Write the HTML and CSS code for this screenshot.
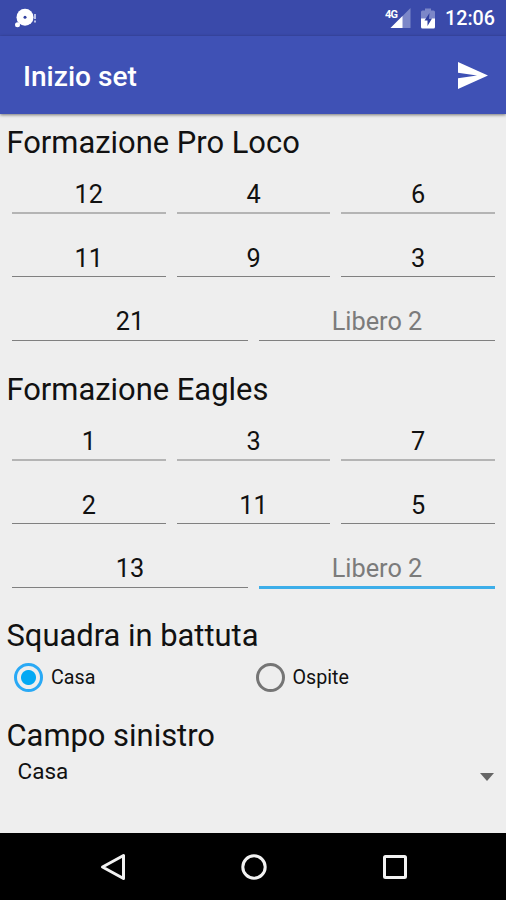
FILE: index.html
```html
<!DOCTYPE html>
<html lang="it">
<head>
<meta charset="utf-8">
<title>Inizio set</title>
<link rel="stylesheet" href="styles.css">
</head>
<body>
<div class="status">
  <svg class="app-icon" width="24" height="20" viewBox="0 0 24 20"><circle cx="11" cy="9.300" r="8.500" fill="#fff"/><circle cx="3.500" cy="16.800" r="2.500" fill="#fff"/><circle cx="11" cy="9.300" r="1.500" fill="#303f9f"/><path d="M21 6v5M21 12.500v2" stroke="#b9c0e6" stroke-width="2"/></svg>
  <svg class="signal" width="26" height="22" viewBox="0 0 26 22"><path d="M5.500 21L25.500 1v20z" fill="#7c87c8"/><path d="M5.500 21L17.500 9v12z" fill="#fff"/><text class="net" x="0" y="10.500" textLength="13">4G</text></svg>
  <svg class="battery" width="14" height="21" viewBox="0 0 14 21"><path d="M0 11V4q0-1.500 1.500-1.500H4V.5h6v2h2.500Q14 2.500 14 4v7z" fill="#7c87c8"/><path d="M0 10.500h14V19q0 1.500-1.500 1.500h-11Q0 20.500 0 19z" fill="#fff"/><path d="M8.500 5L3.500 12.500H6.500V18L11 10.500H8z" fill="#303f9f"/></svg>
  <span class="clock">12:06</span>
</div>
<header class="toolbar">
  <h1>Inizio set</h1>
  <svg width="30" height="27" viewBox="0 0 30 27"><path d="M0 0L30 13.500 0 27V16.200L19 13.500 0 10.800z" fill="#fff"/></svg>
</header>
<main>
  <section>
    <h2>Formazione Pro Loco</h2>
    <div class="row first"><span>12</span><span>4</span><span>6</span></div>
    <div class="row"><span>11</span><span>9</span><span>3</span></div>
    <div class="row"><span>21</span><span class="hint">Libero 2</span></div>
  </section>
  <section>
    <h2>Formazione Eagles</h2>
    <div class="row first"><span>1</span><span>3</span><span>7</span></div>
    <div class="row"><span>2</span><span>11</span><span>5</span></div>
    <div class="row"><span>13</span><span class="hint focus">Libero 2</span></div>
  </section>
  <h2>Squadra in battuta</h2>
  <div class="radios">
    <div class="radio"><i class="dot on"></i>Casa</div>
    <div class="radio"><i class="dot"></i>Ospite</div>
  </div>
  <h2 class="field-title">Campo sinistro</h2>
  <div class="spinner"><span>Casa</span><svg width="14" height="8" viewBox="0 0 14 8"><path d="M0 0h14L7 8z" fill="#666"/></svg></div>
</main>
<nav>
  <svg width="26" height="28" viewBox="0 0 26 28"><path d="M23.500 2.500v23L2.500 14z"/></svg>
  <svg width="26" height="28" viewBox="0 0 26 28"><circle cx="13" cy="14" r="11.200"/></svg>
  <svg width="26" height="28" viewBox="0 0 26 28"><rect x="2.500" y="3.500" width="21" height="21" rx="1"/></svg>
</nav>
</body>
</html>
```

FILE: styles.css
```css
* { box-sizing: border-box; }
body {
  margin: 0;
  height: 900px;
  display: flex;
  flex-direction: column;
  overflow: hidden;
  background: #eee;
  color: #111;
  font-family: Roboto, sans-serif;
}
.status {
  height: 36px;
  flex: none;
  display: flex;
  align-items: center;
  padding: 0 11px 0 14px;
  background: #3a4aaa;
  color: #fff;
}
.app-icon { margin-right: auto; }
.signal { margin-right: 10px; }
.battery { margin-right: 10px; }
.net { font: bold 11px Roboto, sans-serif; fill: #fff; }
.clock { font-size: 19.7px; font-weight: 500; line-height: 36px; padding-top: 2px; }
.toolbar {
  height: 78px;
  flex: none;
  display: flex;
  align-items: center;
  justify-content: space-between;
  padding: 0 18px 0 23px;
  background: #3f51b5;
  color: #fff;
  box-shadow: 0 1px 3px rgba(0, 0, 0, .5);
}
h1 { margin: 0; padding-top: 2px; font-size: 28.1px; font-weight: 500; }
main { flex: 1; }
section { height: 246.5px; }
h2 {
  margin: 0;
  height: 56px;
  padding: 1px 0 0 6.5px;
  font-size: 30.9px;
  font-weight: 400;
  line-height: 56px;
}
.row {
  display: flex;
  gap: 11px;
  height: 43px;
  margin: 0 11px 21px 12px;
}
.row span {
  flex: 1;
  padding-top: 5px;
  border-bottom: 1px solid #808080;
  font-size: 25.3px;
  line-height: 40px;
  text-align: center;
}
.row.first { height: 44px; margin-bottom: 20px; }
.row.first span { border-bottom: 2px solid #b4b4b4; }
.row .hint { color: #7b7b7b; }
.row:last-child span { padding-top: 4px; }
.row .focus { height: 44px; border-bottom: 3px solid #3daee9; }
.radios { display: flex; height: 45px; padding-left: 14px; }
.radio {
  width: 241.5px;
  display: flex;
  align-items: center;
  height: 29px;
  font-size: 19.7px;
}
.dot {
  width: 29px;
  height: 29px;
  margin-right: 8px;
  border: 3px solid #757575;
  border-radius: 50%;
}
.dot.on {
  border-color: #29a9f5;
  background: radial-gradient(circle, #03a9f4 7px, transparent 8px);
}
.field-title { padding-top: 0; }
.spinner {
  display: flex;
  justify-content: space-between;
  align-items: center;
  height: 26px;
  padding: 0 12px 0 17.5px;
  font-size: 22.5px;
}
.spinner span { padding-bottom: 12px; }
nav {
  height: 67px;
  flex: none;
  display: flex;
  justify-content: center;
  align-items: center;
  gap: 115px;
  padding-left: 1px;
  background: #000;
}
nav path, nav circle, nav rect { fill: none; stroke: #f2f2f2; stroke-width: 3; stroke-linejoin: round; }
```
